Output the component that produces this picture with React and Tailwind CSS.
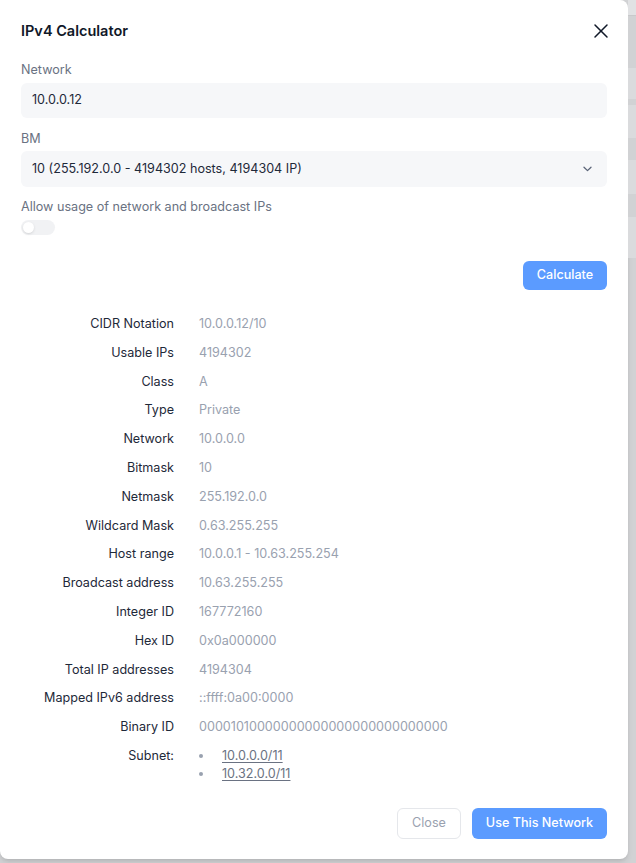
import { X } from 'lucide-react';

const rows = [
  ['CIDR Notation', '10.0.0.12/10'],
  ['Usable IPs', '4194302'],
  ['Class', 'A'],
  ['Type', 'Private'],
  ['Network', '10.0.0.0'],
  ['Bitmask', '10'],
  ['Netmask', '255.192.0.0'],
  ['Wildcard Mask', '0.63.255.255'],
  ['Host range', '10.0.0.1 - 10.63.255.254'],
  ['Broadcast address', '10.63.255.255'],
  ['Integer ID', '167772160'],
  ['Hex ID', '0x0a000000'],
  ['Total IP addresses', '4194304'],
  ['Mapped IPv6 address', '::ffff:0a00:0000'],
  ['Binary ID', '00001010000000000000000000000000'],
];

const subnets = ['10.0.0.0/11', '10.32.0.0/11'];

const App = () => {
  return (
    <div
      className="flex h-[863px] w-[636px] overflow-hidden bg-[#d1d2d4]"
      style={{ fontFamily: 'Inter, "Noto Sans", sans-serif' }}
    >
      <div className="flex h-[859px] w-[628px] shrink-0 flex-col rounded-r-lg rounded-bl-lg bg-white px-[21px] pt-[21px] shadow-md">
        <div className="flex h-5 items-center justify-between">
          <h2 className="text-[14.5px] font-semibold text-gray-900">IPv4 Calculator</h2>
          <X className="mr-[-6px] h-6 w-6 text-gray-900" strokeWidth={1.5} />
        </div>

        <label className="mt-[19px] block text-[12.6px] leading-5 text-gray-500">Network</label>
        <div className="mt-[3px] flex h-[35px] items-center rounded-md bg-[#f6f7f9] px-[11px] text-[12.6px] text-gray-800">
          10.0.0.12
        </div>

        <label className="mt-[11px] block text-[12.6px] leading-5 text-gray-500">BM</label>
        <div className="mt-[2px] flex h-[36px] items-center justify-between rounded-md bg-[#f6f7f9] px-[11px] text-[12.6px] text-gray-800">
          <span>10 (255.192.0.0 - 4194302 hosts, 4194304 IP)</span>
          <svg width="9" height="6" viewBox="0 0 9 6" className="mr-[4px]" fill="none">
            <path d="M1 1.2l3.5 3.4L8 1.2" stroke="#5b6478" strokeWidth="1.3" strokeLinecap="round" strokeLinejoin="round" />
          </svg>
        </div>

        <label className="mt-[10px] block text-[12.6px] leading-5 text-gray-500">
          Allow usage of network and broadcast IPs
        </label>
        <div className="mt-[3px] flex h-[15px] w-[34px] items-center rounded-full bg-[#f1f2f4] px-[2px]">
          <div className="h-[11px] w-[11px] rounded-full bg-white shadow-sm" />
        </div>

        <div className="mt-[26px] flex justify-end">
          <button className="h-[29px] w-[84px] rounded-md bg-[#5b9bff] text-[12.6px] font-medium text-white">
            Calculate
          </button>
        </div>

        <div className="mt-[20px] flex flex-col text-[12.6px]">
          {rows.map(([label, value]) => (
            <div key={label} className="flex h-[28.8px] items-center">
              <span className="w-[153px] shrink-0 text-right text-gray-800">{label}</span>
              <span className="ml-[25px] text-gray-400">{value}</span>
            </div>
          ))}
          <div className="flex pt-[5px]">
            <span className="w-[153px] shrink-0 text-right leading-[18px] text-gray-800">Subnet:</span>
            <ul className="ml-[25px] flex flex-col">
              {subnets.map((s) => (
                <li key={s} className="flex items-center leading-[18px]">
                  <span className="h-[4px] w-[4px] rounded-full bg-gray-400" />
                  <a href="#" className="ml-[19px] text-gray-500 underline underline-offset-2">
                    {s}
                  </a>
                </li>
              ))}
            </ul>
          </div>
        </div>

        <div className="mt-auto mb-[20px] flex justify-end gap-[11px]">
          <button className="h-[31px] w-[64px] rounded-md border border-gray-200 bg-white text-[12.6px] text-gray-400">
            Close
          </button>
          <button className="h-[31px] w-[135px] rounded-md bg-[#5b9bff] text-[12.6px] font-medium text-white">
            Use This Network
          </button>
        </div>
      </div>

      <div className="flex w-[8px] flex-col">
        <div className="h-[15px] bg-[#e1e2e4]" />
        <div className="h-[53px] border-t border-[#c8c9cb] bg-[#d1d2d4]" />
        <div className="h-[31px] bg-[#dadbdd]" />
        <div className="h-[6px] bg-[#d1d2d4]" />
        <div className="h-[33px] bg-[#dadbdd]" />
        <div className="h-[22px] bg-[#d1d2d4]" />
        <div className="h-[34px] bg-[#dadbdd]" />
        <div className="h-[23px] bg-[#d1d2d4]" />
        <div className="h-[41px] bg-[#dadbdd]" />
      </div>
    </div>
  );
};

export default App;
